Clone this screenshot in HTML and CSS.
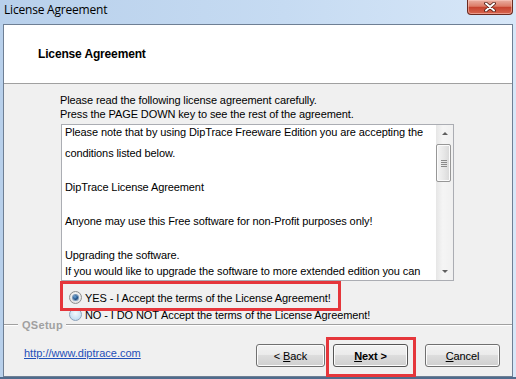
FILE: index.html
```html
<!DOCTYPE html>
<html lang="en">
<head>
    <meta charset="UTF-8">
    <meta name="viewport" content="width=device-width, initial-scale=1.0">
    <title>License Agreement</title>
    <link rel="stylesheet" href="styles.css">
</head>
<body>

<div class="window">
    <div class="titlebar">
        <span class="title">License Agreement</span>
        <button class="close" aria-label="Close">
            <svg width="12" height="10" viewBox="0 0 12 10">
                <path d="M2 1.5 L10 8.5 M10 1.5 L2 8.5" stroke="#4a1810" stroke-width="3.6" stroke-linecap="round"/>
                <path d="M2 1.5 L10 8.5 M10 1.5 L2 8.5" stroke="#fff" stroke-width="2" stroke-linecap="round"/>
            </svg>
        </button>
    </div>

    <div class="client">
        <div class="header">
            <h1>License Agreement</h1>
        </div>

        <div class="content">
            <p class="intro">Please read the following license agreement carefully.<br>Press the PAGE DOWN key to see the rest of the agreement.</p>

            <div class="textbox">
                <div class="doc">
                    <p>Please note that by using DipTrace Freeware Edition you are accepting the</p>
                    <p class="wrap">conditions listed below.</p>
                    <p class="para">DipTrace License Agreement</p>
                    <p class="para">Anyone may use this Free software for non-Profit purposes only!</p>
                    <p class="para">Upgrading the software.</p>
                    <p class="line">If you would like to upgrade the software to more extended edition you can</p>
                </div>
                <div class="scrollbar">
                    <div class="arrow up"></div>
                    <div class="track">
                        <div class="thumb"><span class="grip"></span></div>
                    </div>
                    <div class="arrow down"></div>
                </div>
            </div>

            <label class="radio"><span class="dot checked"></span>YES - I Accept the terms of the License Agreement!</label>
            <label class="radio"><span class="dot"></span>NO - I DO NOT Accept the terms of the License Agreement!</label>
        </div>

        <div class="group"><span>QSetup</span></div>

        <div class="footer">
            <a class="link" href="#">http://www.diptrace.com</a>
            <div class="buttons">
                <button class="btn back">&lt; <u>B</u>ack</button>
                <button class="btn next"><u>N</u>ext &gt;</button>
                <button class="btn cancel"><u>C</u>ancel</button>
            </div>
        </div>

        <!-- red highlight marks from the screenshot -->
        <div class="mark mark-yes"></div>
        <div class="mark mark-next"></div>
    </div>
</div>

</body>
</html>
```

FILE: styles.css
```css
body {
    margin: 0;
    width: 516px;
    height: 379px;
    overflow: hidden;
    font-family: "Liberation Sans", Arial, sans-serif;
    font-size: 11px;
    letter-spacing: -0.1px;
    color: #000;
    background:
        linear-gradient(to bottom, rgba(0, 0, 0, 0) 377px, #4f6b8c 377px),
        linear-gradient(to right, #b8d0eb, #c6dbf2 55%, #d7e7f8);
}

.window {
    display: flex;
    flex-direction: column;
    height: 379px;
}

.titlebar {
    height: 24px;
    display: flex;
    justify-content: space-between;
    align-items: flex-start;
    padding: 0 3px 0 4px;
}

.title {
    font-family: "Open Sans", sans-serif;
    font-size: 12px;
    letter-spacing: -0.2px;
    line-height: 20px;
}

.close {
    width: 46px;
    height: 15px;
    padding: 0;
    border: 1px solid #6a2a20;
    border-top: none;
    border-radius: 0 0 4px 4px;
    background: linear-gradient(#eab0a2, #dc7b66 45%, #c6432e 52%, #d86650 100%);
    box-shadow: inset 0 0 0 1px rgba(255, 210, 200, 0.5);
    display: flex;
    align-items: center;
    justify-content: center;
}

.client {
    flex: 1;
    margin: 0 3px 2px 3px;
    border: 1px solid #6e7f94;
    background: #f0f0f0;
    position: relative;
    display: flex;
    flex-direction: column;
}

.header {
    height: 58px;
    background: #fff;
    border-bottom: 1px solid #a0a0a0;
    display: flex;
    align-items: center;
    padding-left: 34px;
}

.header h1 {
    margin: 0;
    font-size: 12px;
    font-weight: bold;
    letter-spacing: -0.15px;
}

.content {
    padding: 9px 0 0 56px;
}

.intro {
    margin: 0;
    line-height: 14px;
}

.textbox {
    margin: 3px 0 0 1px;
    width: 393px;
    height: 157px;
    box-sizing: border-box;
    border: 1px solid #abadb3;
    background: #fff;
    display: flex;
}

.doc {
    flex: 1;
    overflow: hidden;
    padding-left: 3px;
}

.doc p {
    margin: 0;
    line-height: 14px;
    white-space: nowrap;
}

.doc .wrap {
    margin-top: 7px;
}

.doc .para {
    margin-top: 20px;
}

.doc .line {
    margin-top: 2px;
}

.scrollbar {
    width: 17px;
    display: flex;
    flex-direction: column;
    background: linear-gradient(to right, #e6e6e6, #f5f5f5 40%, #f0f0f0);
}

.arrow {
    height: 17px;
    display: flex;
    align-items: center;
    justify-content: center;
}

.arrow::before {
    content: "";
    width: 0;
    height: 0;
    border-left: 3px solid transparent;
    border-right: 3px solid transparent;
}

.arrow.up::before {
    border-bottom: 3px solid #606060;
}

.arrow.down::before {
    border-top: 3px solid #606060;
}

.track {
    flex: 1;
    padding-top: 2px;
}

.thumb {
    width: 15px;
    height: 38px;
    box-sizing: border-box;
    border: 1px solid #979797;
    border-radius: 2px;
    background: linear-gradient(to right, #f4f4f4, #e8e8e8 50%, #d8d8d8);
    box-shadow: inset 0 0 0 1px #fbfbfb;
    display: flex;
    align-items: center;
    justify-content: center;
}

.grip {
    width: 6px;
    height: 7px;
    background: repeating-linear-gradient(to bottom, #8a8a8a 0, #8a8a8a 1px, transparent 1px, transparent 2px);
}

.radio {
    display: flex;
    align-items: center;
    height: 17px;
    padding-left: 9px;
}

.radio:first-of-type {
    margin-top: 8px;
}

.dot {
    width: 13px;
    height: 13px;
    box-sizing: border-box;
    border-radius: 50%;
    border: 1px solid #8ba2bb;
    background: radial-gradient(circle at 50% 40%, #f4f9fd, #c6def3 70%, #b4d2ee);
    margin-right: 3px;
    display: flex;
    align-items: center;
    justify-content: center;
}

.dot.checked {
    border-color: #8e8f8f;
    background: radial-gradient(circle at 50% 40%, #fff, #e2e2e2 70%, #cfcfcf);
}

.dot.checked::after {
    content: "";
    width: 5px;
    height: 5px;
    border-radius: 50%;
    background: radial-gradient(circle at 40% 35%, #6ea7d8, #1b4c84 60%, #0d2d55);
    box-shadow: 0 0 0 1px #7a98b8;
}

.group {
    display: flex;
    align-items: center;
    height: 14px;
    margin-top: -5px;
    color: #a0a0a0;
    font-weight: bold;
    letter-spacing: 0.3px;
}

.group::before,
.group::after {
    content: "";
    height: 0;
    border-top: 1px solid #a0a0a0;
    border-bottom: 1px solid #fff;
}

.group::before {
    width: 14px;
    margin-right: 4px;
}

.group::after {
    flex: 1;
    margin-left: 3px;
}

.footer {
    display: flex;
    align-items: center;
    padding: 12px 12px 0 20px;
}

.link {
    color: #1f4fb8;
    margin-bottom: 5px;
    line-height: 14px;
    letter-spacing: 0;
}

.buttons {
    margin-left: auto;
    display: flex;
}

.btn {
    height: 23px;
    padding: 0;
    border: 1px solid #707070;
    border-radius: 3px;
    background: linear-gradient(#f2f2f2 0%, #ebebeb 45%, #dddddd 50%, #cfcfcf 100%);
    box-shadow: inset 0 0 0 1px #fcfcfc;
    font-family: "Liberation Sans", Arial, sans-serif;
    font-size: 11px;
    letter-spacing: -0.1px;
    color: #000;
}

.back {
    width: 69px;
}

.next {
    width: 75px;
    margin-left: 8px;
    font-weight: bold;
    border-color: #555;
}

.cancel {
    width: 75px;
    margin-left: 17px;
}

.mark {
    position: absolute;
    box-sizing: border-box;
    border: 3px solid #e5363b;
}

.mark-yes {
    left: 56px;
    top: 256px;
    width: 281px;
    height: 30px;
}

.mark-next {
    left: 322px;
    top: 312px;
    width: 90px;
    height: 40px;
}
```
